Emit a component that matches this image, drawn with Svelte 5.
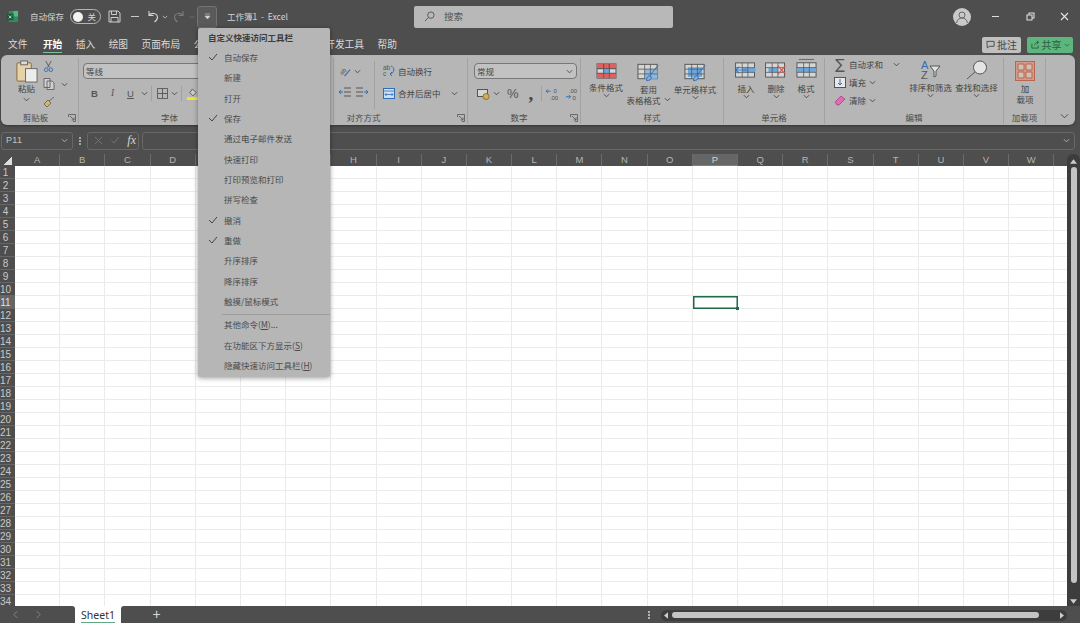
<script>
  const tabs = ['文件', '开始', '插入', '绘图', '页面布局', '公式', '数据', '审阅', '视图', '开发工具', '帮助'];
  const columns = 'ABCDEFGHIJKLMNOPQRSTUVWX'.split('');
  const rows = Array.from({ length: 34 }, (_, i) => i + 1);
  const activeCol = 'P';
  const activeRow = 11;

  const menuItems = [
    { label: '自动保存', checked: true },
    { label: '新建' },
    { label: '打开' },
    { label: '保存', checked: true },
    { label: '通过电子邮件发送' },
    { label: '快速打印' },
    { label: '打印预览和打印' },
    { label: '拼写检查' },
    { label: '撤消', checked: true },
    { label: '重做', checked: true },
    { label: '升序排序' },
    { label: '降序排序' },
    { label: '触摸/鼠标模式' }
  ];
</script>

{#snippet chev(cls = '')}
  <svg class="chev {cls}" viewBox="0 0 8 5" width="7" height="5"><path d="M1 1l3 3 3-3" fill="none" stroke="#444" stroke-width="1"/></svg>
{/snippet}

{#snippet launcher()}
  <svg class="launcher" viewBox="0 0 8 8" width="8" height="8"><path d="M.5 3V.5H7.5V7.5H5M2 2l4 4M6 3.500V6H3.500" fill="none" stroke="#555" stroke-width=".8"/></svg>
{/snippet}

{#snippet gridIcon(fill, x, y, w, h)}
  <rect x="1" y="2" width="20" height="15" fill="#d6d6d6" stroke="#555"/>
  <rect {x} {y} width={w} height={h} fill={fill}/>
  <path d="M1 7h20M1 12h20M8 2v15M14 2v15" stroke="#555" stroke-width=".8"/>
{/snippet}

<div class="app">
  <header class="titlebar">
    <div class="qat">
      <svg class="logo" viewBox="0 0 14 14" width="13" height="13">
        <rect x="3" y="1" width="10" height="12" rx="1" fill="#2f8f5b"/>
        <rect x="8" y="1" width="5" height="6" fill="#57b884"/>
        <rect x="1" y="4" width="7" height="7" fill="#165c38"/>
        <path d="M3 6l3 3M6 6l-3 3" stroke="#fff" stroke-width=".8"/>
      </svg>
      <span class="autosave">自动保存</span>
      <span class="toggle"><span class="knob"></span><span>关</span></span>
      <svg class="save" viewBox="0 0 13 13" width="13" height="13"><path d="M1 1h9l2 2v9H1zM3.500 1v3.500h5V1M3 12V7.500h7V12" fill="none" stroke="#cfcfcf"/></svg>
      <span class="dash"></span>
      <svg class="undo" viewBox="0 0 13 13" width="13" height="13"><path d="M3 1v4.500h4.500M3 5.500C5 2.500 11 2.500 11.500 7c.2 2-1 3.500-3 5" fill="none" stroke="#d4d4d4" stroke-width="1.100"/></svg>
      <svg class="mini" viewBox="0 0 8 5" width="6" height="4"><path d="M1 1l3 3 3-3" fill="none" stroke="#d4d4d4"/></svg>
      <svg class="redo" viewBox="0 0 13 13" width="13" height="13"><path d="M10 1v4.500H5.500M10 5.500C8 2.500 2 2.500 1.500 7c-.2 2 1 3.500 3 5" fill="none" stroke="#7b7b7b" stroke-width="1.100"/></svg>
      <svg class="mini last" viewBox="0 0 8 5" width="6" height="4"><path d="M1 1l3 3 3-3" fill="none" stroke="#7b7b7b"/></svg>
      <button class="customize">
        <svg viewBox="0 0 7 7" width="7" height="7"><path d="M1 1h5M1 3l2.500 3L6 3z" fill="#d4d4d4" stroke="#d4d4d4" stroke-width=".6"/></svg>
      </button>
      <span class="doc">工作簿1&nbsp; -&nbsp; Excel</span>
    </div>
    <div class="search">
      <svg viewBox="0 0 12 12" width="11" height="11"><circle cx="7.500" cy="4.500" r="3.500" fill="none" stroke="#555"/><path d="M5 7L1 11" stroke="#555"/></svg>
      <span>搜索</span>
    </div>
    <div class="winctl">
      <svg class="avatar" viewBox="0 0 18 18" width="18" height="18">
        <circle cx="9" cy="9" r="9" fill="#c9c9c9"/>
        <circle cx="9" cy="7" r="3" fill="none" stroke="#666"/>
        <path d="M3.500 15c.5-3.500 3-5 5.500-5s5 1.500 5.500 5" fill="none" stroke="#666"/>
      </svg>
      <span class="min"></span>
      <svg class="restore" viewBox="0 0 9 9" width="9" height="9"><path d="M1 3h5v5H1zM3 3V1h5v5H6" fill="none" stroke="#dedede" stroke-width="1.100"/></svg>
      <svg class="close" viewBox="0 0 9 9" width="9" height="9"><path d="M1 1l7 7M8 1L1 8" stroke="#e6e6e6" stroke-width="1.100"/></svg>
    </div>
  </header>

  <nav class="tabbar">
    <div class="tabs">
      {#each tabs as tab}
        <span class="tab" class:current={tab === '开始'}>{tab}</span>
      {/each}
    </div>
    <div class="actions">
      <button class="comment">
        <svg viewBox="0 0 10 10" width="9" height="9"><path d="M1 1.500h8v5.500H3.500L1.500 9z" fill="none" stroke="#444"/></svg>
        批注
      </button>
      <button class="share">
        <svg viewBox="0 0 10 10" width="9" height="9"><path d="M1 4v5h7V6M4 6c0-2 2-3.500 4-3.500M6.500 1L8.500 2.500 6.500 4.500" fill="none" stroke="#2c5f40"/></svg>
        共享
        <svg viewBox="0 0 8 5" width="6" height="4"><path d="M1 1l3 3 3-3" fill="none" stroke="#2c5f40"/></svg>
      </button>
    </div>
  </nav>

  <section class="ribbon">
    <div class="group clipboard">
      <div class="body">
        <div class="big paste">
          <svg viewBox="0 0 24 24" width="23" height="23">
            <rect x="2" y="3" width="15" height="19" rx="1" fill="#e5d2a6" stroke="#8a6a35"/>
            <rect x="6" y="1" width="7" height="4" fill="#ddd" stroke="#666"/>
            <rect x="11" y="9" width="12" height="14" fill="#ececec" stroke="#666"/>
          </svg>
          <span>粘贴</span>
          {@render chev()}
        </div>
        <div class="stack">
          <svg viewBox="0 0 12 12" width="11" height="11"><path d="M3 0l4 7M9 0L5 7" stroke="#555"/><circle cx="3.500" cy="9.500" r="2" fill="none" stroke="#2f6fb5"/><circle cx="8.500" cy="9.500" r="2" fill="none" stroke="#2f6fb5"/></svg>
          <span class="row-tight copy">
            <svg viewBox="0 0 12 12" width="12" height="12"><path d="M1 .5h6v9H1zM4 3h5l2 2v6.500H4z" fill="#cfcfcf" stroke="#555" stroke-width=".8"/></svg>
            {@render chev()}
          </span>
          <svg viewBox="0 0 12 12" width="12" height="12"><path d="M11 1L6 5M1 8l4-4 3 3-4 4z" fill="#d9b560" stroke="#5c5c5c" stroke-width=".8"/></svg>
        </div>
      </div>
      <div class="label">剪贴板{@render launcher()}</div>
    </div>

    <div class="group font">
      <div class="body col">
        <div class="select fontname">等线</div>
        <div class="tools fonttools">
          <b class="glyph">B</b>
          <i class="glyph serif">I</i>
          <u class="glyph">U</u>
          {@render chev()}
          <span class="vsep"></span>
          <svg viewBox="0 0 12 12" width="11" height="11"><path d="M.5.500h11v11H.500zM6 .5v11M.5 6h11" fill="none" stroke="#555"/></svg>
          {@render chev()}
          <span class="vsep"></span>
          <svg viewBox="0 0 12 13" width="11" height="12"><path d="M6 1l4 4-3.500 3.500L3 5z" fill="#ccc" stroke="#555"/><rect y="10" width="12" height="3" fill="#f4e62e"/></svg>
        </div>
      </div>
      <div class="label">字体</div>
    </div>

    <div class="group align">
      <div class="body">
        <div class="align-left">
          <span class="row-tight orient">
            <svg viewBox="0 0 13 13" width="12" height="12"><text x="3" y="11" class="dec" transform="rotate(-40 3 11)">ab</text><path d="M6 12l6-7" stroke="#2f6fb5" stroke-width="1.200"/></svg>
            {@render chev()}
          </span>
          <span class="row-tight indents">
            <svg viewBox="0 0 12 10" width="12" height="10"><path d="M5 1h7M5 5h7M5 9h7" stroke="#555"/><path d="M0 5h4M2 3L0 5l2 2" stroke="#2f6fb5" fill="none"/></svg>
            <svg viewBox="0 0 12 10" width="12" height="10"><path d="M0 1h7M0 5h7M0 9h7" stroke="#555"/><path d="M8 5h4M10 3l2 2-2 2" stroke="#2f6fb5" fill="none"/></svg>
          </span>
        </div>
        <span class="vsep tall"></span>
        <div class="align-right">
          <span class="row-tight action">
            <svg viewBox="0 0 12 12" width="12" height="12"><text x="0" y="5" class="dec">ab</text><text x="0" y="11" class="dec">c</text><path d="M8 1c4 1 4 7-1 8" fill="none" stroke="#2f6fb5"/><path d="M9 7L7 9l2 2" fill="none" stroke="#2f6fb5"/></svg>
            <span>自动换行</span>
          </span>
          <span class="row-tight action">
            <svg viewBox="0 0 12 11" width="12" height="11"><rect x=".5" y=".5" width="11" height="10" fill="#cfdeee" stroke="#2f6fb5"/><path d="M.5 3h11M2 6.500h8M3.500 5L2 6.500 3.500 8M8.500 5L10 6.500 8.500 8" fill="none" stroke="#2f6fb5" stroke-width=".8"/></svg>
            <span>合并后居中</span>
            <span class="push">{@render chev()}</span>
          </span>
        </div>
      </div>
      <div class="label">对齐方式{@render launcher()}</div>
    </div>

    <div class="group number">
      <div class="body col">
        <div class="select numfmt">常规{@render chev()}</div>
        <div class="tools numtools">
          <svg viewBox="0 0 13 12" width="13" height="12"><rect x=".5" y="1.500" width="10" height="7" fill="#d5d5d5" stroke="#555"/><circle cx="9" cy="8.500" r="3" fill="#d6ae52" stroke="#6b5a2b" stroke-width=".7"/></svg>
          {@render chev()}
          <span class="percent">%</span>
          <span class="comma">,</span>
          <span class="vsep"></span>
          <svg viewBox="0 0 14 13" width="13" height="12"><path d="M0 3.500h5M2 1.500l-2 2 2 2" fill="none" stroke="#2f6fb5"/><text x="8" y="5.500" class="dec">0</text><text x="4" y="12.500" class="dec">.00</text></svg>
          <svg viewBox="0 0 14 13" width="13" height="12"><text x="4" y="5.500" class="dec">.00</text><path d="M1 9.500h5M4 7.500l2 2-2 2" fill="none" stroke="#2f6fb5"/><text x="8" y="12.500" class="dec">0</text></svg>
        </div>
      </div>
      <div class="label">数字{@render launcher()}</div>
    </div>

    <div class="group styles">
      <div class="body">
        <div class="big w-cond">
          <svg viewBox="0 0 22 19" width="21" height="18">{@render gridIcon('#e0605f', 1, 2, 20, 5)}<rect x="1" y="12" width="20" height="5" fill="#e0605f"/><rect x="8" y="7" width="6" height="5" fill="#6ea7dc"/><path d="M1 7h20M1 12h20M8 2v15M14 2v15" stroke="#555" stroke-width=".8"/></svg>
          <span>条件格式</span>
          {@render chev()}
        </div>
        <div class="big w-table">
          <svg viewBox="0 0 24 20" width="23" height="20">{@render gridIcon('#8fb8e0', 8, 7, 13, 10)}<path d="M22 3l-8 10M10 19c0-3 1-5 3-5l2 1c0 3-2 4-5 4z" stroke="#2f6fb5" fill="#7db2e3"/></svg>
          <span>套用</span>
          <span class="row-tight">表格格式{@render chev()}</span>
        </div>
        <div class="big w-cell">
          <svg viewBox="0 0 24 20" width="23" height="20">{@render gridIcon('#6ea7dc', 4, 5, 15, 10)}<path d="M22 3l-8 10M10 19c0-3 1-5 3-5l2 1c0 3-2 4-5 4z" stroke="#2f6fb5" fill="#7db2e3"/></svg>
          <span>单元格样式</span>
          {@render chev()}
        </div>
      </div>
      <div class="label">样式</div>
    </div>

    <div class="group cells">
      <div class="body">
        <div class="big w-cellbtn">
          <svg viewBox="0 0 24 19" width="24" height="18">{@render gridIcon('#6ea7dc', 8, 7, 14, 5)}<path d="M1 9.500h12M5 6L1 9.500 5 13" fill="none" stroke="#2f7fc8" stroke-width="1.300"/></svg>
          <span>插入</span>
          {@render chev()}
        </div>
        <div class="big w-cellbtn">
          <svg viewBox="0 0 24 19" width="24" height="18">{@render gridIcon('#6ea7dc', 4, 7, 10, 5)}<path d="M14 5l8 9M22 5l-8 9" stroke="#d9534f" stroke-width="1.200"/></svg>
          <span>删除</span>
          {@render chev()}
        </div>
        <div class="big w-cellbtn format">
          <svg viewBox="0 0 22 22" width="21" height="21"><g transform="translate(0 3)">{@render gridIcon('#6ea7dc', 1, 7, 20, 5)}</g><path d="M3 1.500h16" stroke="#2f6fb5"/></svg>
          <span>格式</span>
          {@render chev()}
        </div>
      </div>
      <div class="label">单元格</div>
    </div>

    <div class="group editing">
      <div class="body">
        <div class="edit-list">
          <span class="row-tight action">
            <span class="sigma">∑</span><span>自动求和</span><span class="push">{@render chev()}</span>
          </span>
          <span class="row-tight action">
            <svg viewBox="0 0 12 11" width="12" height="11"><rect x=".5" y=".5" width="11" height="10" fill="#e8e8e8" stroke="#555"/><path d="M6 2v6M4 6l2 2 2-2" fill="none" stroke="#2f6fb5"/></svg>
            <span>填充</span>{@render chev()}
          </span>
          <span class="row-tight action">
            <svg viewBox="0 0 12 11" width="12" height="11"><path d="M1 7l6-6 4 3-6 6H3z" fill="#e06bb4" stroke="#a23a7f" stroke-width=".7"/></svg>
            <span>清除</span>{@render chev()}
          </span>
        </div>
        <div class="big w-sort">
          <svg viewBox="0 0 22 20" width="22" height="20"><text x="1" y="9" class="az blue">A</text><text x="1" y="19" class="az">Z</text><path d="M10 6h10l-4 5v5l-2 1v-6z" fill="#e4e4e4" stroke="#555"/></svg>
          <span>排序和筛选</span>
          {@render chev()}
        </div>
        <div class="big w-find">
          <svg viewBox="0 0 22 20" width="22" height="20"><circle cx="14" cy="7.500" r="6.500" fill="#e4e4e4" stroke="#555"/><path d="M9 12L1 19" stroke="#555"/></svg>
          <span>查找和选择</span>
          {@render chev()}
        </div>
      </div>
      <div class="label">编辑</div>
    </div>

    <div class="group addins">
      <div class="body">
        <div class="big w-addin">
          <svg viewBox="0 0 20 20" width="20" height="20"><rect x=".5" y=".5" width="19" height="19" fill="#d49c88" stroke="#b8664e"/><path d="M3 3h6v6H3zM11 3h6v6h-6zM3 11h6v6H3zM11 11h6v6h-6z" fill="#d0c0ba" stroke="#b8664e"/></svg>
          <span>加</span>
          <span>载项</span>
        </div>
      </div>
      <div class="label">加载项</div>
    </div>

    <div class="collapse">
      <svg viewBox="0 0 10 6" width="9" height="6"><path d="M1 1l4 4 4-4" fill="none" stroke="#444"/></svg>
    </div>
  </section>

  <section class="formula">
    <div class="namebox">P11
      <svg viewBox="0 0 8 5" width="7" height="5"><path d="M1 1l3 3 3-3" fill="none" stroke="#b9b9b9"/></svg>
    </div>
    <span class="dots"></span>
    <div class="fxbtns">
      <svg viewBox="0 0 10 10" width="9" height="9"><path d="M1 1l8 8M9 1L1 9" stroke="#777"/></svg>
      <svg viewBox="0 0 10 10" width="10" height="9"><path d="M1 5l3 3 5-7" fill="none" stroke="#777"/></svg>
      <span class="fx">fx</span>
    </div>
    <div class="fxinput">
      <svg viewBox="0 0 8 5" width="7" height="5"><path d="M1 1l3 3 3-3" fill="none" stroke="#b9b9b9"/></svg>
    </div>
  </section>

  <section class="sheet">
    <div class="colheads">
      <span class="corner"></span>
      {#each columns as col}
        <span class="colhead" class:on={col === activeCol}>{col}</span>
      {/each}
    </div>
    <div class="sheetbody">
      <div class="rowheads">
        {#each rows as row}
          <span class="rowhead" class:on={row === activeRow}>{row}</span>
        {/each}
      </div>
      <div class="cells-grid">
        {#each rows as row}
          {#each columns as col}
            <span class="cell" class:active={row === activeRow && col === activeCol}></span>
          {/each}
        {/each}
      </div>
      <div class="vscroll">
        <svg viewBox="0 0 8 5" width="7" height="5"><path d="M0 5l4-5 4 5z" fill="#ccc"/></svg>
        <span class="vthumb"></span>
        <svg viewBox="0 0 8 5" width="7" height="5"><path d="M0 0l4 5 4-5z" fill="#ccc"/></svg>
      </div>
    </div>
  </section>

  <footer class="sheetbar">
    <div class="navs">
      <svg viewBox="0 0 6 10" width="5" height="9"><path d="M5 1L1 5l4 4" fill="none" stroke="#8f8f8f"/></svg>
      <svg viewBox="0 0 6 10" width="5" height="9"><path d="M1 1l4 4-4 4" fill="none" stroke="#8f8f8f"/></svg>
    </div>
    <div class="sheettab">Sheet1</div>
    <div class="addarea">
      <span class="plus">+</span>
      <span class="splitter"></span>
      <div class="hscroll">
        <svg viewBox="0 0 5 8" width="4" height="7"><path d="M5 0L0 4l5 4z" fill="#ccc"/></svg>
        <span class="hthumb"></span>
        <svg viewBox="0 0 5 8" width="4" height="7"><path d="M0 0l5 4-5 4z" fill="#ccc"/></svg>
      </div>
    </div>
  </footer>

  <div class="menu">
    <div class="menu-title">自定义快速访问工具栏</div>
    {#each menuItems as item}
      <div class="menu-item">
        {#if item.checked}
          <svg class="check" viewBox="0 0 10 8" width="10" height="8"><path d="M1 4l3 3 5-6" fill="none" stroke="#444"/></svg>
        {/if}
        <span>{item.label}</span>
      </div>
    {/each}
    <div class="menu-sep"></div>
    <div class="menu-item"><span>其他命令(<u>M</u>)...</span></div>
    <div class="menu-item"><span>在功能区下方显示(<u>S</u>)</span></div>
    <div class="menu-item"><span>隐藏快速访问工具栏(<u>H</u>)</span></div>
  </div>
</div>

<style>
  :global(body) {
    margin: 0;
  }

  .app {
    position: relative;
    width: 1080px;
    height: 623px;
    overflow: hidden;
    display: flex;
    flex-direction: column;
    background: #4e4e4e;
    color: #444;
    font-family: "Noto Sans CJK SC", "Noto Sans", sans-serif;
    font-size: 8.5px;
    line-height: 11px;
  }

  /* title bar */
  .titlebar {
    height: 33px;
    flex: none;
    display: flex;
    align-items: center;
    position: relative;
    color: #d4d4d4;
  }

  .qat {
    display: flex;
    align-items: center;
    padding-left: 6px;
    width: 414px;
    box-sizing: border-box;
    flex: none;
  }

  .logo { margin-right: 11px; }

  .autosave { font-size: 8.5px; margin-right: 6px; }

  .toggle {
    width: 31px;
    height: 15px;
    box-sizing: border-box;
    border: 1px solid #b5b5b5;
    border-radius: 8px;
    display: flex;
    align-items: center;
    justify-content: space-between;
    padding: 0 4px 0 2px;
    font-size: 8.5px;
    margin-right: 7px;
  }

  .knob {
    width: 10px;
    height: 10px;
    border-radius: 50%;
    background: #f2f2f2;
  }

  .save { margin-right: 10px; }

  .dash {
    width: 8px;
    height: 1px;
    background: #c8c8c8;
    margin-right: 7px;
  }

  .mini { margin-left: 3px; margin-right: 5px; }

  .mini.last { margin-right: 2px; }

  .customize {
    width: 20px;
    height: 22px;
    margin: 0 10px 0 0;
    padding: 0;
    display: flex;
    align-items: center;
    justify-content: center;
    background: #5a5a5a;
    border: 1px solid #737373;
    border-radius: 3px;
  }

  .doc { font-size: 8.5px; }

  .search {
    width: 259px;
    height: 22px;
    flex: none;
    display: flex;
    align-items: center;
    gap: 9px;
    padding-left: 10px;
    box-sizing: border-box;
    background: #b8b8b8;
    border-radius: 2px;
    color: #555;
    font-size: 9.5px;
  }

  .winctl {
    flex: 1;
    display: flex;
    align-items: center;
    padding-left: 280px;
  }

  .min {
    width: 7px;
    height: 1.500px;
    background: #dedede;
    margin: 0 27px 0 21px;
  }

  .restore { margin-right: 25px; }

  /* tab row */
  .tabbar {
    height: 22px;
    flex: none;
    display: flex;
    align-items: center;
    justify-content: space-between;
    padding: 0 7px 0 8px;
  }

  .tabs {
    display: flex;
    gap: 13.500px;
    color: #dcdcdc;
    font-size: 9.700px;
  }

  .tab { white-space: nowrap; line-height: 16px; }

  .tab.current {
    color: #fff;
    font-weight: 700;
    margin-left: 2px;
    border-bottom: 1px solid #79c29b;
  }

  .actions {
    display: flex;
    gap: 6px;
    margin-top: 1px;
  }

  .comment, .share {
    height: 16px;
    padding: 0;
    border: 0;
    border-radius: 2px;
    display: flex;
    align-items: center;
    justify-content: center;
    gap: 2px;
    font-family: inherit;
    font-size: 10px;
    color: #444;
  }

  .comment { width: 39px; background: #c0c0c0; }

  .share { width: 46px; background: #5cb67e; color: #2c5f40; }

  /* ribbon */
  .ribbon {
    height: 70px;
    flex: none;
    margin: 0 5px 0 1px;
    padding-top: 3px;
    box-sizing: border-box;
    display: flex;
    background: #b6b6b6;
    border-radius: 6px;
    box-shadow: 0 1px 2px rgba(0, 0, 0, 0.3);
  }

  .group {
    position: relative;
    flex: none;
    display: flex;
    flex-direction: column;
    border-right: 1px solid #a2a2a2;
    box-sizing: border-box;
    margin-bottom: 1px;
  }

  .body {
    flex: 1;
    display: flex;
    min-height: 0;
  }

  .body.col { flex-direction: column; }

  .label {
    height: 13px;
    box-sizing: border-box;
    text-align: center;
    color: #4c4c4c;
    font-size: 8.500px;
    line-height: 13px;
  }

  .launcher {
    position: absolute;
    right: 2px;
    bottom: 2px;
  }

  .clipboard { width: 78px; }
  .font { width: 255px; }
  .align { width: 134px; }
  .number { width: 113px; }
  .styles { width: 143px; }
  .cells { width: 101px; }
  .editing { width: 179px; }
  .addins { width: 42px; }

  .big {
    display: flex;
    flex-direction: column;
    align-items: center;
    text-align: center;
    white-space: nowrap;
    flex: none;
  }

  .big svg:first-child { margin-bottom: 2px; }

  .chev { flex: none; }

  .row-tight {
    display: flex;
    align-items: center;
    gap: 3px;
    white-space: nowrap;
  }

  .clipboard .body { padding-left: 13px; }

  .paste { width: 25px; padding-top: 2px; }

  .big.paste svg:first-child { margin-bottom: 0; }

  .paste .chev { margin-top: 3px; }

  .clipboard .label { padding-right: 8px; }

  .font .label { padding-right: 73px; }

  .stack {
    display: flex;
    flex-direction: column;
    align-items: flex-start;
    gap: 6px;
    padding: 3px 0 0 4px;
  }

  .copy { gap: 6px; }

  .select {
    height: 16px;
    box-sizing: border-box;
    border: 1px solid #777;
    border-radius: 4px;
    background: #c2c2c2;
    padding-left: 2px;
    display: flex;
    align-items: center;
    justify-content: space-between;
    flex: none;
  }

  .fontname {
    margin: 5px 0 0 4px;
    width: 200px;
  }

  .tools {
    display: flex;
    align-items: center;
    padding: 7px 0 0 12px;
  }

  .fonttools u { margin: 0 7px 0 13px; }

  .fonttools i { margin-left: 13px; }

  .fonttools .vsep { margin: 0 5px 0 3px; }

  .fonttools svg + .chev { margin-left: 3px; }

  .glyph {
    font-family: "Liberation Sans", sans-serif;
    font-size: 9.500px;
    color: #555;
  }

  .glyph.serif { font-family: "Liberation Serif", serif; }

  .vsep {
    width: 1px;
    height: 15px;
    background: #a0a0a0;
    flex: none;
  }

  .vsep.tall {
    height: 48px;
    margin: 3px 0 0 6px;
  }

  .align-left {
    width: 34px;
    display: flex;
    flex-direction: column;
    padding-left: 5px;
    box-sizing: border-box;
    gap: 10px;
    padding-top: 7px;
  }

  .indents { gap: 5px; }

  .align-right {
    flex: 1;
    display: flex;
    flex-direction: column;
    padding: 7px 9px 0 8px;
    gap: 10px;
  }

  .action { gap: 3px; height: 12px; }

  .push { margin-left: auto; display: flex; }

  .align .label { padding-right: 74px; }

  .number .label { padding-right: 10px; }

  .numfmt {
    margin: 5px 0 0 6px;
    width: 103px;
    padding-right: 3px;
  }

  .numtools { padding-left: 9px; }

  .numtools .chev { margin-left: 3px; }

  .percent {
    font-size: 13px;
    color: #555;
    margin-left: 7px;
    font-family: "Liberation Sans", sans-serif;
  }

  .comma {
    font-weight: 700;
    font-size: 19px;
    line-height: 11px;
    color: #444;
    margin: 0 8px 0 10px;
    font-family: "Liberation Serif", serif;
  }

  .numtools .vsep + svg { margin-left: 4px; }

  .numtools svg:last-child { margin-left: 6px; }

  .dec {
    font-size: 6.500px;
    fill: #555;
    font-family: "Liberation Sans", sans-serif;
  }

  .styles .body {
    padding: 4px 0 0 6px;
  }

  .w-cond { width: 38px; }

  .w-table { width: 47px; }

  .w-cell { width: 44px; margin-left: 1px; }

  .big span + span { line-height: 11px; }

  .cells .body { padding: 1px 0 0 7px; }

  .w-cellbtn { width: 30px; padding-top: 2px; }

  .w-cellbtn svg:first-child { margin-bottom: 3px; }

  .w-cellbtn span { margin-top: 1px; }

  .format { padding-top: 0; margin-top: -1px; }

  .edit-list {
    width: 80px;
    box-sizing: border-box;
    padding: 0 5px 0 9px;
    display: flex;
    flex-direction: column;
    gap: 6px;
    flex: none;
  }

  .sigma {
    width: 12px;
    font-size: 14px;
    line-height: 12px;
    color: #555;
    text-align: center;
    font-family: "DejaVu Sans", sans-serif;
  }

  .w-sort { width: 45px; margin: 2px 0 0 3px; }

  .w-find { width: 47px; margin-top: 2px; }

  .az {
    font-family: "Liberation Sans", sans-serif;
    font-size: 11px;
    fill: #555;
  }

  .az.blue { fill: #2f6fb5; }

  .w-addin { width: 42px; padding-top: 3px; }

  .collapse {
    flex: 1;
    display: flex;
    align-items: flex-end;
    justify-content: flex-end;
    padding: 0 6px 6px 0;
  }

  /* formula bar */
  .formula {
    height: 29px;
    flex: none;
    display: flex;
    align-items: center;
    padding: 2px 5px 0 1px;
    box-sizing: border-box;
    color: #c4c4c4;
  }

  .namebox, .fxbtns, .fxinput {
    height: 18px;
    box-sizing: border-box;
    border: 1px solid #686868;
    border-radius: 3px;
    display: flex;
    align-items: center;
  }

  .namebox {
    width: 72px;
    padding: 0 4px;
    justify-content: space-between;
    font-family: "Liberation Sans", sans-serif;
    font-size: 9px;
    letter-spacing: 0.3px;
  }

  .dots {
    width: 2px;
    height: 8px;
    margin: 0 6px 0 6px;
    background: repeating-linear-gradient(#a5a5a5 0 2px, transparent 2px 3px);
  }

  .fxbtns {
    width: 52px;
    padding: 0 2px 0 6px;
    justify-content: space-between;
  }

  .fx {
    font-family: "Liberation Serif", serif;
    font-style: italic;
    font-size: 12px;
    color: #d6d6d6;
  }

  .fxinput {
    flex: 1;
    margin-left: 3px;
    justify-content: flex-end;
    padding-right: 4px;
  }

  /* sheet */
  .sheet {
    height: 452px;
    flex: none;
    display: flex;
    flex-direction: column;
    overflow: hidden;
  }

  .colheads {
    height: 12px;
    flex: none;
    display: flex;
    font-family: "Liberation Sans", sans-serif;
    font-size: 9.500px;
    line-height: 12px;
    color: #b5b5b5;
  }

  .corner {
    width: 15px;
    flex: none;
    position: relative;
    background: linear-gradient(135deg, transparent 50%, #dedede 50%) 3px 2px / 9px 9px no-repeat;
  }

  .colhead {
    width: 45.200px;
    flex: none;
    text-align: center;
    box-sizing: border-box;
    border-right: 1px solid #6b6b6b;
  }

  .colhead.on {
    background: #666;
    color: #d0d0d0;
    border-bottom: 1px solid #4f9a70;
  }

  .sheetbody {
    flex: 1;
    display: flex;
    min-height: 0;
  }

  .rowheads {
    width: 15px;
    flex: none;
    display: flex;
    flex-direction: column;
    color: #c9c9c9;
    font-family: "Liberation Sans", sans-serif;
    font-size: 10px;
  }

  .rowhead {
    height: 13px;
    line-height: 13px;
    flex: none;
    text-align: center;
    padding-right: 4px;
    box-sizing: border-box;
    border-bottom: 1px solid #666;
  }

  .rowhead.on { background: #666; color: #e0e0e0; }

  .cells-grid {
    width: 1052px;
    flex: none;
    display: grid;
    grid-template-columns: repeat(24, 45.200px);
    grid-auto-rows: 13px;
    background: #fff;
    overflow: hidden;
  }

  .cell {
    box-sizing: border-box;
    border-right: 1px solid #ebebeb;
    border-bottom: 1px solid #ebebeb;
  }

  .cell.active {
    position: relative;
    border: 1px solid #1f6b45;
    box-shadow: inset 0 0 0 0.500px #1f6b45;
  }

  .cell.active::after {
    content: '';
    position: absolute;
    right: -2px;
    bottom: -2px;
    width: 3px;
    height: 3px;
    background: #1f6b45;
  }

  .vscroll {
    flex: 1;
    margin-top: -12px;
    display: flex;
    flex-direction: column;
    align-items: center;
    background: #3d3d3d;
    border-radius: 6px 6px 0 0;
    padding: 5px 0 2px;
    position: relative;
    z-index: 1;
  }

  .vthumb {
    width: 6px;
    flex: 1;
    margin: 3px 0 16px;
    border-radius: 3px;
    background: #c4c4c4;
  }

  /* bottom bar */
  .sheetbar {
    flex: 1;
    display: flex;
    background: #fff;
    min-height: 0;
  }

  .navs {
    width: 75px;
    flex: none;
    display: flex;
    align-items: center;
    gap: 18px;
    padding-left: 13px;
    box-sizing: border-box;
    background: #4e4e4e;
    border-radius: 0 3px 0 0;
  }

  .sheettab {
    width: 46px;
    flex: none;
    color: #333;
    font-family: "Noto Sans", sans-serif;
    font-size: 10.500px;
    line-height: 14px;
    padding-top: 2px;
    text-align: center;
    box-sizing: border-box;
  }

  .sheettab::after {
    content: '';
    display: block;
    height: 1px;
    width: 34px;
    margin: 0 auto;
    background: #63a684;
  }

  .addarea {
    flex: 1;
    display: flex;
    align-items: center;
    background: #4e4e4e;
    border-radius: 3px 0 0 0;
    padding-left: 31px;
  }

  .plus {
    color: #dadada;
    font-family: "Liberation Sans", sans-serif;
    font-size: 14px;
    line-height: 17px;
    width: 9px;
    text-align: center;
  }

  .splitter {
    width: 2px;
    height: 8px;
    margin-left: 487px;
    background: repeating-linear-gradient(#b5b5b5 0 2px, transparent 2px 3px);
  }

  .hscroll {
    width: 406px;
    height: 11px;
    margin: 1px 0 0 11px;
    padding: 0 3px;
    box-sizing: border-box;
    display: flex;
    align-items: center;
    gap: 4px;
    background: #3d3d3d;
    border-radius: 6px;
  }

  .hthumb {
    flex: 1;
    height: 6px;
    margin: 0 17px 0 0;
    border-radius: 3px;
    background: #c4c4c4;
  }

  /* customize menu */
  .menu {
    position: absolute;
    left: 198px;
    top: 28px;
    width: 132px;
    height: 349px;
    box-sizing: border-box;
    padding-top: 3px;
    background: #b6b6b6;
    border-radius: 2px;
    box-shadow: 0 1px 5px rgba(0, 0, 0, 0.4);
    z-index: 5;
  }

  .menu-title {
    height: 13px;
    line-height: 13px;
    padding-left: 10px;
    font-weight: 700;
    color: #3c3c3c;
    margin-bottom: 3px;
  }

  .menu-item {
    position: relative;
    height: 20.350px;
    line-height: 20.350px;
    padding-left: 26px;
    white-space: nowrap;
    color: #4b4b4b;
  }

  .menu-item u { text-underline-offset: 1px; }

  .check {
    position: absolute;
    left: 10px;
    top: 6px;
  }

  .menu-sep {
    height: 1px;
    margin: 3px 0 -1px 24px;
    background: #9d9d9d;
  }
</style>
